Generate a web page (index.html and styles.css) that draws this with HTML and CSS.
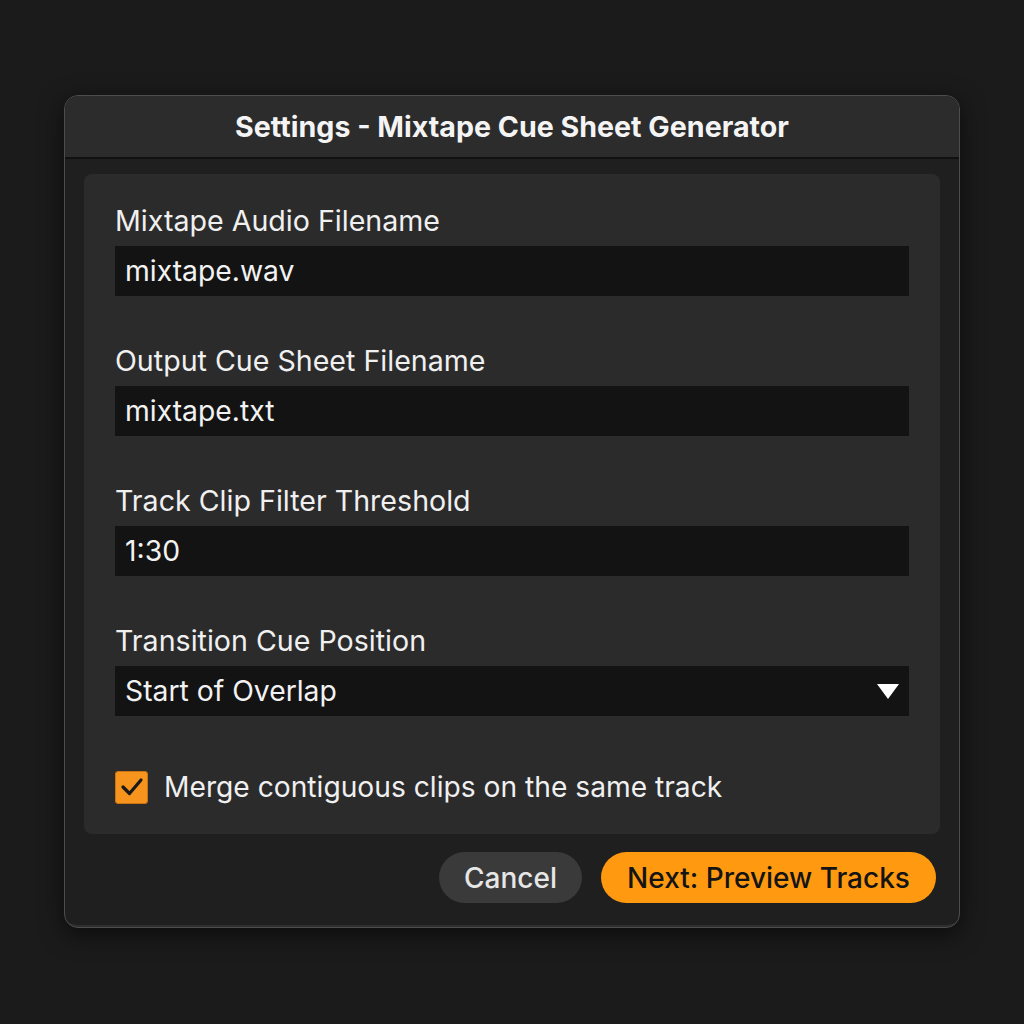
FILE: index.html
```html
<!DOCTYPE html>
<html lang="en">

<head>
    <meta charset="UTF-8">
    <meta name="viewport" content="width=device-width, initial-scale=1.0">
    <title>Settings - Mixtape Cue Sheet Generator</title>
    <link rel="stylesheet" href="styles.css">
</head>

<body>
    <div class="window">
        <div class="title-bar">Settings - Mixtape Cue Sheet Generator</div>

        <div class="window-body">
            <div class="panel">
                <div class="field">
                    <label for="audio-file">Mixtape Audio Filename</label>
                    <input type="text" id="audio-file" value="mixtape.wav">
                </div>

                <div class="field">
                    <label for="cue-file">Output Cue Sheet Filename</label>
                    <input type="text" id="cue-file" value="mixtape.txt">
                </div>

                <div class="field">
                    <label for="threshold">Track Clip Filter Threshold</label>
                    <input type="text" id="threshold" value="1:30">
                </div>

                <div class="field">
                    <label for="cue-position">Transition Cue Position</label>
                    <div class="select-box" id="cue-position">
                        <span>Start of Overlap</span>
                        <svg width="22" height="15" viewBox="0 0 22 15">
                            <polygon points="0,0 22,0 11,15" fill="#ffffff" />
                        </svg>
                    </div>
                </div>

                <label class="check-row">
                    <span class="checkbox">
                        <svg width="24" height="20" viewBox="0 0 24 20">
                            <path d="M3 10 L9.5 16.5 L21 3" fill="none" stroke="#1a1a1a" stroke-width="3.2"
                                stroke-linecap="round" stroke-linejoin="round" />
                        </svg>
                    </span>
                    Merge contiguous clips on the same track
                </label>
            </div>

            <div class="button-row">
                <button class="btn btn-cancel">Cancel</button>
                <button class="btn btn-primary">Next: Preview Tracks</button>
            </div>
        </div>
    </div>
</body>

</html>
```

FILE: styles.css
```css
body {
    font-family: Inter, "Noto Sans", sans-serif;
    margin: 0;
    padding: 95px 0 0 0;
    background-color: #1b1b1b;
    color: #f2f2f2;
    display: flex;
    justify-content: center;
    align-items: flex-start;
    min-height: 1024px;
    box-sizing: border-box;
}

.window {
    width: 896px;
    box-sizing: border-box;
    border: 1.5px solid #4d4d4d;
    border-radius: 14px;
    background-color: #1f1f1f;
    box-shadow: 0 6px 24px rgba(0, 0, 0, 0.6), inset 0 -8px 0 -6px #2e2e2e;
    overflow: hidden;
}

.title-bar {
    height: 61px;
    display: flex;
    align-items: center;
    justify-content: center;
    background-color: #2c2c2c;
    border-bottom: 2px solid #111111;
    font-size: 28.6px;
    font-weight: 700;
    color: #f4f4f4;
}

.window-body {
    padding: 15px 19px 24px 19px;
}

.panel {
    background-color: #2b2b2b;
    border-radius: 8px;
    padding: 30px 31px 30px 31px;
}

.field {
    display: flex;
    flex-direction: column;
    margin-bottom: 48px;
}

.field:nth-child(4) {
    margin-bottom: 54px;
}

.field label {
    font-size: 28.6px;
    line-height: 34px;
    font-weight: 400;
    color: #f0f0f0;
    margin-bottom: 8px;
}

.field input[type="text"],
.select-box {
    height: 50px;
    box-sizing: border-box;
    border: none;
    outline: none;
    background-color: #131313;
    color: #f2f2f2;
    font-family: inherit;
    font-size: 28.3px;
    padding: 0 10px;
}

.select-box {
    display: flex;
    align-items: center;
    justify-content: space-between;
}

.check-row {
    display: flex;
    align-items: center;
    gap: 16px;
    font-size: 28.2px;
    color: #f0f0f0;
    height: 34px;
}

.checkbox {
    width: 33px;
    height: 33px;
    border-radius: 3px;
    background-color: #f7941d;
    border: 1px solid #c87410;
    box-sizing: border-box;
    display: flex;
    align-items: center;
    justify-content: center;
}

.button-row {
    display: flex;
    justify-content: flex-end;
    gap: 19px;
    margin-top: 18px;
    padding-right: 4px;
}

.btn {
    height: 51px;
    border: none;
    border-radius: 26px;
    font-family: inherit;
    font-size: 28px;
    font-weight: 500;
    cursor: pointer;
}

.btn-cancel {
    width: 143px;
    background-color: #3a3a3a;
    color: #e6e6e6;
}

.btn-primary {
    width: 335px;
    background-color: #ff9a10;
    color: #141414;
}
```
